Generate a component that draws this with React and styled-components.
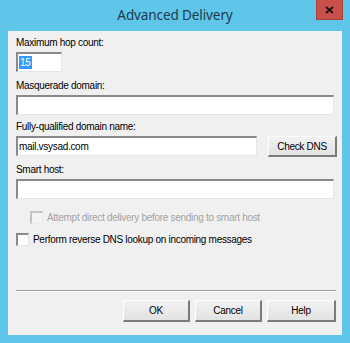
import React from 'react';
import styled, { createGlobalStyle } from 'styled-components';

const Global = createGlobalStyle`
  html, body {
    margin: 0;
    padding: 0;
    background: #5fc6ea;
  }
`;

const Window = styled.div`
  width: 350px;
  height: 343px;
  display: flex;
  flex-direction: column;
  background: #5fc6ea;
  font-family: "Liberation Sans", Arial, sans-serif;
  font-size: 10px;
  letter-spacing: -0.3px;
  color: #000;
`;

const TitleBar = styled.div`
  position: relative;
  height: 31px;
  display: flex;
  align-items: center;
  justify-content: center;
  flex-shrink: 0;
`;

const Title = styled.span`
  font-family: "Noto Sans", "Open Sans", sans-serif;
  font-size: 13.5px;
  letter-spacing: -0.1px;
  color: #1c3b4e;
  margin-top: -2px;
`;

const CloseButton = styled.div`
  position: absolute;
  top: 0;
  left: 316px;
  width: 27px;
  height: 20px;
  background: #c7504a;
  border: 1px solid #a8423c;
  border-top: none;
  box-sizing: border-box;
  display: flex;
  align-items: center;
  justify-content: center;
`;

const Client = styled.div`
  flex: 1;
  margin: 0 8px 8px 8px;
  background: #f0f0f0;
  padding: 5px 6px 0 8px;
  display: flex;
  flex-direction: column;
`;

const Label = styled.div`
  line-height: 13px;
  height: 13px;
  margin-top: ${p => p.$top || 0}px;
`;

const Input = styled.div`
  box-sizing: border-box;
  height: 20px;
  width: ${p => p.$width || 318}px;
  margin-top: 3px;
  background: #fff;
  border-style: solid;
  border-width: 2px 1px 1px 2px;
  border-color: #8a8a8a #e6e6e6 #e6e6e6 #8a8a8a;
  display: flex;
  align-items: center;
  padding-left: 1px;
  flex-shrink: 0;
`;

const Selected = styled.span`
  background: #3399ff;
  color: #fff;
  line-height: 13px;
  padding: 0 1px;
`;

const Row = styled.div`
  display: flex;
  align-items: flex-start;
  gap: 11px;
`;

const Button = styled.div`
  box-sizing: border-box;
  width: ${p => p.$width || 67}px;
  height: ${p => p.$height || 22}px;
  margin-top: ${p => p.$top || 0}px;
  background: linear-gradient(#f2f2f2, #e2e2e2);
  border-style: solid;
  border-width: 1px 2px 2px 1px;
  border-color: #fcfcfc #7b7b7b #7b7b7b #fcfcfc;
  display: flex;
  align-items: center;
  justify-content: center;
  flex-shrink: 0;
`;

const CheckRow = styled.div`
  display: flex;
  align-items: center;
  gap: 4px;
  height: 13px;
  margin-top: ${p => p.$top || 0}px;
  margin-left: ${p => p.$indent || 0}px;
  color: ${p => (p.$disabled ? '#a3a3a3' : '#000')};
`;

const Box = styled.span`
  box-sizing: border-box;
  width: 13px;
  height: 13px;
  flex-shrink: 0;
  background: ${p => (p.$disabled ? '#f4f4f4' : '#fff')};
  border-style: solid;
  border-width: 2px 1px 1px 2px;
  border-color: ${p => (p.$disabled ? '#c4c4c4 #ececec #ececec #c4c4c4' : '#8a8a8a #e6e6e6 #e6e6e6 #8a8a8a')};
`;

const Separator = styled.div`
  height: 0;
  margin-top: auto;
  border-top: 1px solid #a0a0a0;
  border-bottom: 1px solid #fff;
  width: 320px;
`;

const Footer = styled.div`
  display: flex;
  justify-content: flex-end;
  gap: 5px;
  padding: 8px 0 13px 0;
`;

export default function App() {
  return (
    <Window>
      <Global />
      <TitleBar>
        <Title>Advanced Delivery</Title>
        <CloseButton>
          <svg width="9" height="8" viewBox="0 0 9 8">
            <path d="M1 1 L8 7 M8 1 L1 7" stroke="#2a1212" strokeWidth="2" />
          </svg>
        </CloseButton>
      </TitleBar>
      <Client>
        <Label>Maximum hop count:</Label>
        <Input $width={46}><Selected>15</Selected></Input>
        <Label $top={7}>Masquerade domain:</Label>
        <Input />
        <Label $top={5}>Fully-qualified domain name:</Label>
        <Row>
          <Input $width={241}>mail.vsysad.com</Input>
          <Button $width={69} $height={21} $top={3}>Check DNS</Button>
        </Row>
        <Label $top={6}>Smart host:</Label>
        <Input />
        <CheckRow $top={12} $indent={14} $disabled>
          <Box $disabled />
          Attempt direct delivery before sending to smart host
        </CheckRow>
        <CheckRow $top={9}>
          <Box />
          Perform reverse DNS lookup on incoming messages
        </CheckRow>
        <Separator />
        <Footer>
          <Button>OK</Button>
          <Button>Cancel</Button>
          <Button $width={69}>Help</Button>
        </Footer>
      </Client>
    </Window>
  );
}
